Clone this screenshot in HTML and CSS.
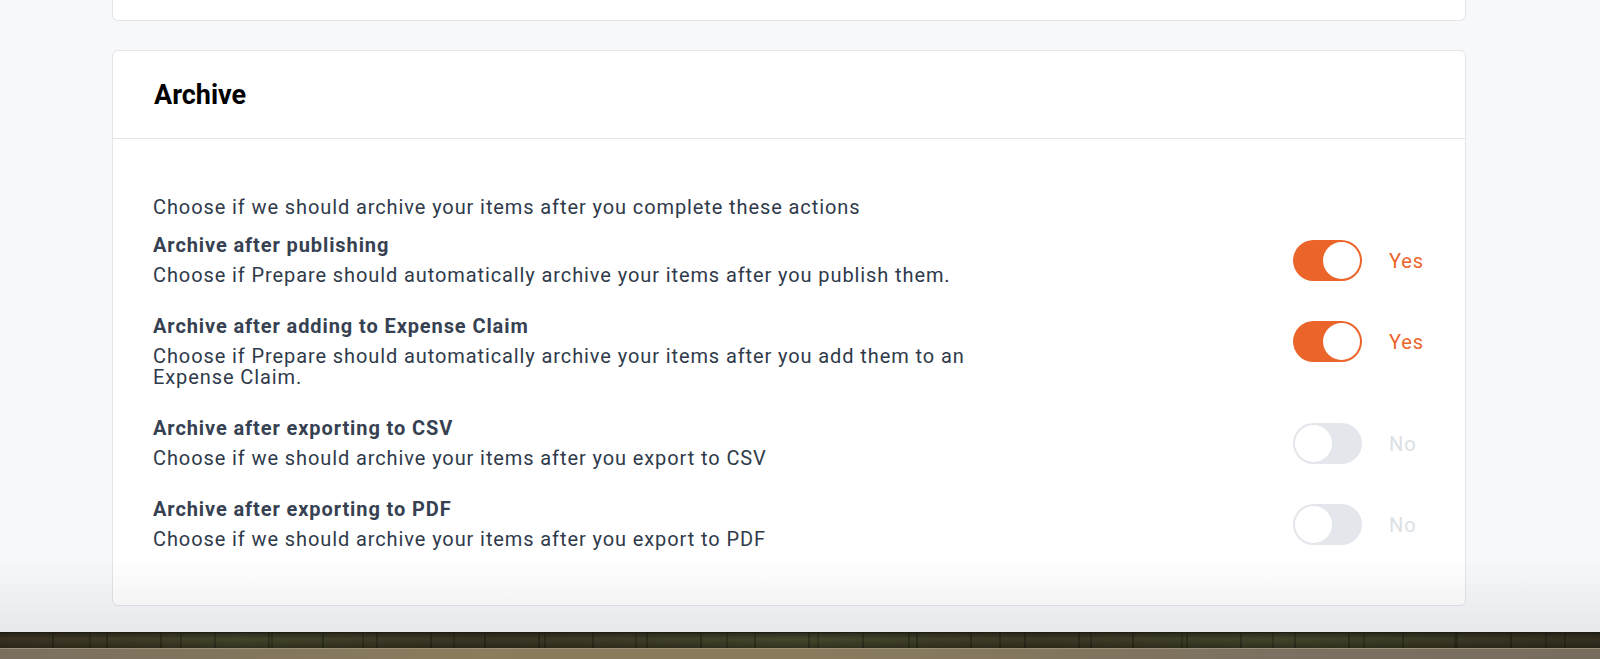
FILE: index.html
```html
<!DOCTYPE html>
<html lang="en">

<head>
    <meta charset="UTF-8">
    <meta name="viewport" content="width=device-width, initial-scale=1.0">
    <title>Archive settings</title>
    <link rel="stylesheet" href="styles.css">
</head>

<body>
    <div class="viewport">
        <div class="page">
            <div class="card card-top"></div>

            <section class="card">
                <header class="card-header">
                    <h2>Archive</h2>
                </header>
                <div class="card-body">
                    <p class="intro">Choose if we should archive your items after you complete these actions</p>

                    <div class="setting">
                        <div class="setting-text">
                            <div class="setting-label">Archive after publishing</div>
                            <div class="setting-desc">Choose if Prepare should automatically archive your items after you publish them.</div>
                        </div>
                        <div class="toggle-group">
                            <span class="switch on"><span class="knob"></span></span>
                            <span class="toggle-label on">Yes</span>
                        </div>
                    </div>

                    <div class="setting">
                        <div class="setting-text">
                            <div class="setting-label">Archive after adding to Expense Claim</div>
                            <div class="setting-desc">Choose if Prepare should automatically archive your items after you add them to an Expense Claim.</div>
                        </div>
                        <div class="toggle-group">
                            <span class="switch on"><span class="knob"></span></span>
                            <span class="toggle-label on">Yes</span>
                        </div>
                    </div>

                    <div class="setting">
                        <div class="setting-text">
                            <div class="setting-label">Archive after exporting to CSV</div>
                            <div class="setting-desc">Choose if we should archive your items after you export to CSV</div>
                        </div>
                        <div class="toggle-group">
                            <span class="switch off"><span class="knob"></span></span>
                            <span class="toggle-label off">No</span>
                        </div>
                    </div>

                    <div class="setting">
                        <div class="setting-text">
                            <div class="setting-label">Archive after exporting to PDF</div>
                            <div class="setting-desc">Choose if we should archive your items after you export to PDF</div>
                        </div>
                        <div class="toggle-group">
                            <span class="switch off"><span class="knob"></span></span>
                            <span class="toggle-label off">No</span>
                        </div>
                    </div>
                </div>
            </section>
        </div>
        <div class="fade"></div>
    </div>

    <div class="desktop">
        <div class="desktop-strip"></div>
        <div class="desktop-dock"></div>
    </div>
</body>

</html>
```

FILE: styles.css
```css
body {
    font-family: Roboto, "Liberation Sans", Arial, sans-serif;
    background-color: #f7f8fa;
    margin: 0;
    padding: 0;
}

.viewport {
    position: relative;
    height: 632px;
    overflow: hidden;
    border-bottom: 1px solid #1e1d16;
}

.page {
    margin-left: 112px;
    width: 1354px;
}

.card {
    background-color: #fff;
    border: 1px solid #e3e5e9;
    border-radius: 6px;
    margin-bottom: 29px;
}

.card-top {
    height: 20px;
    border-top: none;
    border-radius: 0 0 6px 6px;
}

.card-header {
    height: 87px;
    display: flex;
    align-items: center;
    padding-left: 41px;
    border-bottom: 1px solid #e3e5e9;
}

.card-header h2 {
    margin: 0;
    font-size: 27px;
    font-weight: 700;
    color: #000;
}

.card-body {
    padding: 58px 40px 55px 40px;
}

.intro {
    margin: 0 0 15px 0;
    font-size: 20px;
    line-height: 21px;
    letter-spacing: 0.9px;
    color: #2f3a4b;
}

.setting {
    display: flex;
    justify-content: space-between;
    align-items: flex-start;
    margin-bottom: 28px;
}

.setting:last-child {
    margin-bottom: 0;
}

.setting-text {
    max-width: 840px;
}

.setting-label {
    font-size: 20px;
    line-height: 25px;
    font-weight: 700;
    letter-spacing: 0.9px;
    color: #364152;
    margin-bottom: 7px;
}

.setting-desc {
    font-size: 20px;
    line-height: 21px;
    letter-spacing: 0.9px;
    color: #2f3a4b;
}

.toggle-group {
    display: flex;
    align-items: center;
    gap: 27px;
    margin-top: 7px;
}

.switch {
    display: flex;
    width: 69px;
    height: 41px;
    padding: 2px;
    box-sizing: border-box;
    border-radius: 21px;
}

.switch.on {
    background-color: #eb6429;
    justify-content: flex-end;
}

.switch.off {
    background-color: #e3e6eb;
    justify-content: flex-start;
}

.knob {
    width: 37px;
    height: 37px;
    border-radius: 50%;
    background-color: #fff;
}

.toggle-label {
    width: 36px;
    font-size: 20px;
    letter-spacing: 0.9px;
}

.toggle-label.on {
    color: #ec652a;
}

.toggle-label.off {
    color: #dcdfe4;
}

/* shadow at the bottom of the window */
.fade {
    position: absolute;
    left: 0;
    right: 0;
    bottom: 0;
    height: 75px;
    background: linear-gradient(rgba(40, 45, 60, 0), rgba(40, 45, 60, 0.08));
}

.desktop-strip {
    height: 15px;
    background:
        repeating-linear-gradient(90deg, rgba(0, 0, 0, 0) 0, rgba(0, 0, 0, 0) 52px, rgba(10, 10, 5, 0.6) 53px, rgba(0, 0, 0, 0) 54px),
        repeating-linear-gradient(90deg, rgba(0, 0, 0, 0) 0, rgba(0, 0, 0, 0) 89px, rgba(10, 10, 5, 0.5) 90px, rgba(0, 0, 0, 0) 91px),
        linear-gradient(rgba(20, 18, 10, 0.5), rgba(0, 0, 0, 0) 40%, rgba(20, 18, 10, 0.4)),
        linear-gradient(90deg, #3a3222, #44452b 15%, #3a3524 30%, #46482d 50%, #3c3825 65%, #43452b 80%, #342f20);
}

.desktop-dock {
    height: 11px;
    border-top: 1px solid #9c9178;
    background: linear-gradient(90deg, #7a6f5f, #8b7c5b 30%, #887a5c 55%, #7b7061 80%, #776d5f);
}
```
